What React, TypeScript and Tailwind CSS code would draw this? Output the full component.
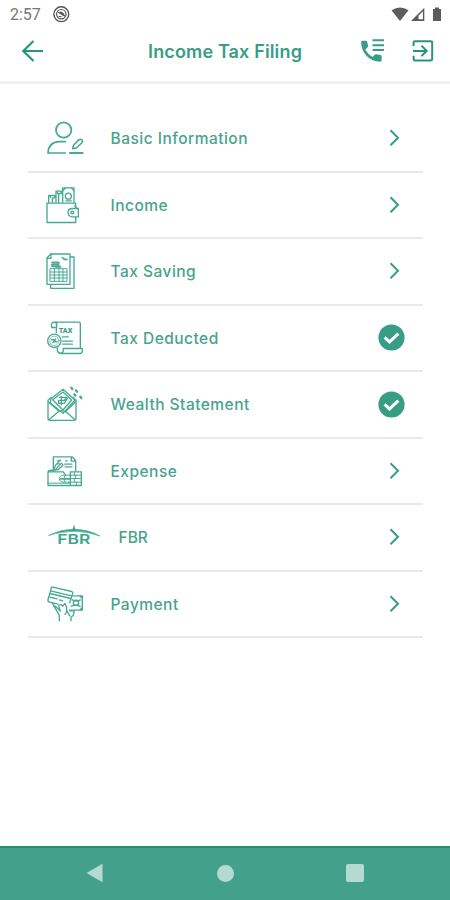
import React from 'react';

type IconProps = { top: number; wide?: boolean; children: React.ReactNode };

function RowIcon({ top, wide = false, children }: IconProps) {
  return (
    <svg
      className={wide ? 'h-11 w-[62px] shrink-0' : 'h-11 w-12 shrink-0'}
      viewBox={`36 ${top} ${wide ? 186 : 144} 132`}
      fill="none"
      stroke="#46a992"
      strokeWidth="4"
      strokeLinecap="round"
      strokeLinejoin="round"
    >
      {children}
    </svg>
  );
}

const PersonIcon = () => (
  <RowIcon top={18}>
    <circle cx="101" cy="60" r="23" strokeWidth="5.5" />
    <path d="M106 95H88Q56 96 54 129H106" strokeWidth="5" />
    <path d="M120 129H158" strokeWidth="5.5" />
    <path d="M128 116L131 105L147 89Q152 86 156 90Q159 94 155 99L139 114L128 116Z" strokeWidth="5" />
  </RowIcon>
);

const WalletIcon = () => (
  <RowIcon top={22.5}>
    <path d="M51 83H137V97M137 125V141H51V83" />
    <path d="M56 81V60H74V67H67V80M78 80V47H94V54H86V80M98 80V37H132V81" />
    <path d="M99 45L107 37M124 37L132 45M61 61V66M82 49V54" />
    <circle cx="115" cy="62" r="9" />
    <path d="M108 76H124M141 99H125Q114 101 114 111Q115 123 127 124H145V99H136" />
    <circle cx="127" cy="111" r="4" />
    <path d="M134 91L141 99" />
  </RowIcon>
);

const SheetsIcon = () => (
  <RowIcon top={21}>
    <path d="M62 36H120V127H51V48Z" />
    <path d="M51 49H63V36M121 45H132V139H62V129" />
    <path d="M97 47L103 52H111M66 61H86V67H66V73H89" strokeWidth="5" />
    <path d="M61 80H111V118H61ZM61 90H111M61 99H111M61 108H111M73 80V118M87 80V118M99 80V118" strokeWidth="3" />
    <path d="M78 74H91" strokeWidth="6" />
  </RowIcon>
);

const TaxIcon = () => (
  <RowIcon top={22.5}>
    <path d="M69 41H147Q152 42 151 49V118M80 43V57H65Q61 42 72 41Q80 41 80 50M79 58V72" />
    <circle cx="73" cy="97" r="20" />
    <circle cx="73" cy="97" r="14" strokeWidth="2" />
    <path d="M65 94H71M75 100H81M77 92L69 102" strokeWidth="4.5" />
    <path d="M97 85H115M98 98H127M98 107H127" />
    <path d="M82 117V126Q84 135 95 135H151Q159 132 157 120H100V126Q99 134 92 134" />
    <text
      x="86" y="74" fill="#389d85" stroke="none"
      className="font-['Roboto',sans-serif] text-[20px] font-black"
      textLength="41" lengthAdjust="spacingAndGlyphs"
    >TAX</text>
  </RowIcon>
);

const EnvelopeIcon = () => (
  <RowIcon top={21}>
    <path d="M64 67L54 76V130Q54 136 60 136H132Q138 136 138 130V76L129 67" />
    <path d="M55 80L86 108M137 80L108 108M57 134L84 111Q96 102 110 112L135 134" />
    <path d="M63 71L99 43L135 75L99 115L61 84ZM68 74L99 51L125 75L99 105Z" />
    <path d="M88 67H109L103 76H86V85H103L112 70M94 64V89" />
    <path d="M124 38L127 42M138 46L141 50M133 58L136 62M151 65L154 69" strokeWidth="7" />
  </RowIcon>
);

const ExpenseIcon = () => (
  <RowIcon top={22.5}>
    <path d="M70 83V46H126L137 57V88M124 48V59H136" />
    <path d="M82 58H91M82 67H88M107 58H112M104 68H126M105 76H126" />
    <path d="M59 88H73L94 65L99 71L84 85H71L77 71L91 55" />
    <path d="M54 91Q55 86 62 86H69M54 91H100L107 102M54 91V132H121V91H154V132H121" />
    <path d="M119 101H101Q88 102 88 112Q88 121 101 122H119M103 105V119M54 125H120M121 101H153M121 111H153M121 122H153M133 91V101M137 101V111M133 111V122M140 122V132" strokeWidth="3" />
    <path d="M92 112H119" strokeWidth="5" />
  </RowIcon>
);

const FbrIcon = () => (
  <RowIcon top={24} wide>
    <path d="M57 85Q91 67 132 67Q175 67 210 87Q172 73 132 73Q91 74 57 85ZM132 55V68" fill="#3fa68d" strokeWidth="2" />
    <path d="M126 69L132 56L138 69Z" fill="#3fa68d" stroke="none" />
    <text
      x="82" y="110" fill="#3fa68d" stroke="none"
      className="font-['Inter',sans-serif] text-[39px] font-semibold"
      textLength="99" lengthAdjust="spacingAndGlyphs"
    >FBR</text>
  </RowIcon>
);

const PaymentIcon = () => (
  <RowIcon top={19.5}>
    <path d="M65 34L125 48Q130 50 128 55L119 82M65 34L54 72Q53 78 59 80L84 86M62 46L124 61M60 54L122 69M60 65L81 70M88 73L98 76" />
    <path d="M129 61H157V104H118M127 73Q140 80 151 73M124 92Q138 86 151 93M150 62L157 69M149 104L157 96" />
    <circle cx="138" cy="82" r="8" />
    <path d="M67 83L82 109L88 120V136M74 91Q84 99 91 107L86 91Q92 83 98 92L105 84L110 96V109L105 117M119 106H133L130 119L123 125V136M112 108L119 121" />
  </RowIcon>
);

const Chevron = () => (
  <svg className="mr-[22px] h-5 w-[14px]" viewBox="0 0 14 20" fill="none" stroke="#389d84" strokeWidth="2">
    <path d="M3.5 2.2L11 9.7L3.5 17.2" />
  </svg>
);

const Check = () => (
  <svg className="mr-[18px] size-[27px]" viewBox="0 0 27 27">
    <circle cx="13.5" cy="13.5" r="13.1" fill="#389d85" />
    <path d="M6.6 13.3L11.5 17.9L20.4 9.6" fill="none" stroke="#fff" strokeWidth="3" />
  </svg>
);

const rows = [
  { label: 'Basic Information', icon: PersonIcon },
  { label: 'Income', icon: WalletIcon },
  { label: 'Tax Saving', icon: SheetsIcon },
  { label: 'Tax Deducted', icon: TaxIcon, done: true },
  { label: 'Wealth Statement', icon: EnvelopeIcon, done: true },
  { label: 'Expense', icon: ExpenseIcon },
  { label: 'FBR', icon: FbrIcon },
  { label: 'Payment', icon: PaymentIcon },
];

export default function App() {
  return (
    <div className="flex h-[900px] w-[450px] flex-col overflow-hidden bg-white font-['Inter',sans-serif]">
      <div className="flex h-[30px] shrink-0 items-center pl-[10px] pr-2">
        <span className="w-[42px] font-['Roboto',sans-serif] text-[16px] leading-[30px] text-[#777]">2:57</span>
        <svg className="h-[18px] w-[18px]" viewBox="0 0 18 18" fill="none" stroke="#555">
          <circle cx="9.3" cy="8.2" r="7.4" strokeWidth="1.4" />
          <circle cx="9.3" cy="8.2" r="4.7" strokeWidth="1.2" />
          <path d="M6.3 6.6Q11 4.6 12.6 10.2L9.4 8.4L7 6.8Z" fill="#555" strokeWidth="0.9" />
          <path d="M6.5 10.5H9.5" />
        </svg>
        <svg className="ml-auto h-[18px] w-[52px]" viewBox="390 5.5 52 18" fill="#5c5c5c">
          <path d="M391.5 9.7Q400 4.2 408.5 9.7L400 20.5Z" />
          <path d="M411 20.5L424.3 7.3V20.5Z" />
          <path d="M418.5 18.7V15.2L422.9 10.8V18.7Z" fill="#fff" />
          <path d="M433 8.5H435V7H439V8.5H441V20.5H433Z" />
        </svg>
      </div>
      <header className="flex h-[54px] shrink-0 items-start border-b-[3px] border-[#f1f1f1] pl-[21px] pr-[14px]">
        <svg className="mt-[9px] h-6 w-6" viewBox="0 0 24 24" fill="none" stroke="#26957c" strokeWidth="2.2">
          <path d="M22 12H2.5M12.5 2L2.3 12L12.5 22" />
        </svg>
        <h1 className="ml-[103px] mt-[10px] w-[165px] whitespace-nowrap text-[18px] font-semibold leading-6 tracking-[0.15px] text-[#389d84]">Income Tax Filing</h1>
        <svg className="ml-[46px] mt-[8px] h-[26px] w-[26px]" viewBox="359 38 26 26" fill="#389d84">
          <path d="M361.2 42Q361.2 40.8 362.4 40.8H366.1Q367 40.8 367.2 41.8L368.1 46Q368.2 46.7 367.7 47.2L365.3 49.6Q368 54.7 372.6 57.1L375 54.5Q375.6 54 376.3 54.2L380.5 55.1Q381.6 55.3 381.6 56.3V60.3Q381.6 61.7 380.2 61.7C370 61.8 361.1 53 361.2 42Z" />
          <path d="M372.5 39.3H384V41.2H372.5ZM372.5 44.2H384V46.2H372.5ZM372.5 49H384V51H372.5Z" />
        </svg>
        <svg className="ml-auto mt-[9px] h-6 w-6" viewBox="412 39 24 24" fill="none" stroke="#26957c" strokeWidth="2">
          <path d="M413.6 46V42.5Q413.6 41.3 414.8 41.3H430.5Q432.2 41.3 432.2 42.7V58.8Q432.2 60.5 430.5 60.5H415Q413.6 60.5 413.6 59.2V55.7M413 50.9H426.3M421.5 45.8L426.7 50.9L421.5 56" />
        </svg>
      </header>
      <main className="ml-7 mr-[27px] mt-[22px] flex-1">
        {rows.map(({ label, icon: Icon, done }) => (
          <div key={label} className="flex h-[66.5px] items-center border-b-2 border-[#e9e9e9] pl-[14px]">
            <Icon />
            <span className={`${label === 'FBR' ? 'ml-[14.5px] tracking-normal' : 'ml-[20.5px] tracking-[0.48px]'} flex-1 whitespace-nowrap pt-px text-[15.5px] font-medium text-[#48a38d]`}>{label}</span>
            {done ? <Check /> : <Chevron />}
          </div>
        ))}
      </main>
      <nav className="flex h-[54px] shrink-0 items-center border-t-2 border-[#1f927a] bg-[#43a08b] px-[86px] pb-[2px]">
        <svg className="h-5 w-[18px]" viewBox="0 0 18 20" fill="#b5dad3"><path d="M0.5 10L16.5 0.8V19.2Z" /></svg>
        <div className="ml-[113px] size-[17px] rounded-full bg-[#b5dad3]" />
        <div className="ml-[112px] size-[18px] rounded-[2px] bg-[#b5dad3]" />
      </nav>
    </div>
  );
}
